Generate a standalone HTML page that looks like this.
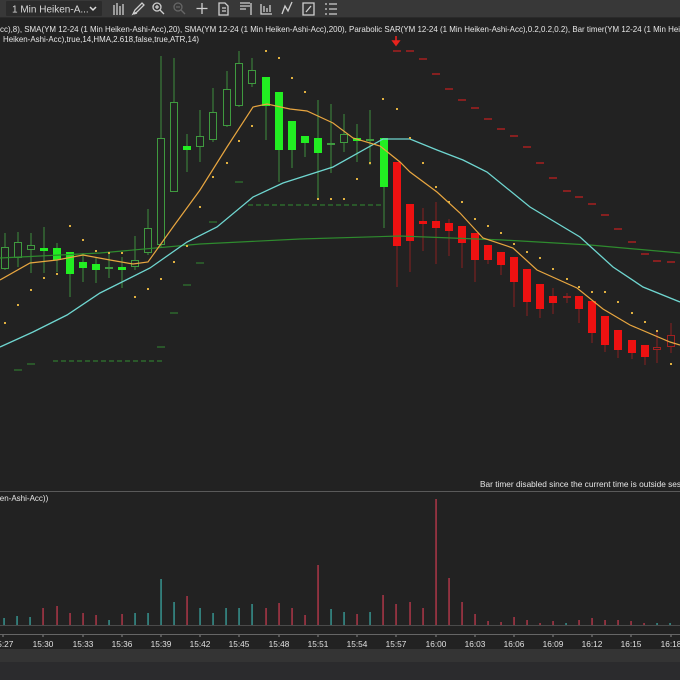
<!DOCTYPE html>
<html><head><meta charset="utf-8"><style>
html,body{margin:0;padding:0;background:#222;}
body{width:680px;height:680px;overflow:hidden;position:relative;font-family:"Liberation Sans",sans-serif;}
svg{position:absolute;left:0;top:0}
</style></head><body>
<svg id="s" width="680" height="680" viewBox="0 0 680 680" xmlns="http://www.w3.org/2000/svg">
<rect x="0" y="0" width="680" height="680" fill="#222"/>
<rect x="0" y="0" width="680" height="17" fill="#383838"/>
<rect x="0" y="17" width="680" height="1" fill="#2a2a2a"/>
<rect x="6" y="1" width="96" height="15" fill="#2b2b2b" rx="1"/>
<text x="12" y="12.5" font-size="10" fill="#d8d8d8">1 Min Heiken-A...</text>
<path d="M90 7 l3 3 l3 -3" stroke="#ddd" stroke-width="1.5" fill="none"/>
<g stroke="#cfcfcf" fill="none" stroke-width="1.3">
<path d="M114 5v10M117 3v12M120 6v9M123 4v11"/>
<path d="M133 14l2-4 7-7 2 2-7 7z M134 14l3-1"/>
<circle cx="157" cy="7" r="4"/><path d="M160 10l4 4M155 7h4M157 5v4"/>
<circle cx="178" cy="7" r="4" stroke="#666"/><path d="M181 10l4 4M176 7h4" stroke="#666"/>
<path d="M202 3v11M196.5 8.5h11"/>
<path d="M219 3h6l3 3v9h-9z M222 8h4M222 11h4"/>
<path d="M240 3h10M240 6h10M240 9h6M251 3v12"/>
<path d="M261 4v10h11M264 6v6M267 8v4M270 5v7"/>
<path d="M282 14l3-8 3 5 4-9"/>
<path d="M303 3h11v12h-11z M306 12l5-6"/>
<path d="M325 4h2M329 4h8M325 9h2M329 9h8M325 14h2M329 14h8"/>
</g>
<text x="0" y="32" font-size="8.3" fill="#e6e6e6" textLength="684" lengthAdjust="spacingAndGlyphs">cc),8), SMA(YM 12-24 (1 Min Heiken-Ashi-Acc),20), SMA(YM 12-24 (1 Min Heiken-Ashi-Acc),200), Parabolic SAR(YM 12-24 (1 Min Heiken-Ashi-Acc),0.2,0.2,0.2), Bar timer(YM 12-24 (1 Min Heik</text>
<text x="3" y="42" font-size="8.3" fill="#e6e6e6" textLength="196" lengthAdjust="spacingAndGlyphs">Heiken-Ashi-Acc),true,14,HMA,2.618,false,true,ATR,14)</text>
<path d="M396 36v7M393 41l3 4 3-4z" stroke="#e8231d" fill="#e8231d" stroke-width="1.6"/>
<g id="g"></g>
<text x="480" y="487" font-size="8.3" fill="#e6e6e6">Bar timer disabled since the current time is outside ses</text>
<rect x="0" y="491" width="680" height="1" fill="#5a5a5a"/>
<text x="-6" y="501" font-size="8" fill="#e6e6e6">iken-Ashi-Acc))</text>
<rect x="0" y="625" width="680" height="1" fill="#4a4a4a"/>
<rect x="0" y="634" width="680" height="1" fill="#666"/>
<rect x="0" y="649" width="680" height="13" fill="#343434"/>
<rect x="0" y="662" width="680" height="18" fill="#2b2b2d"/>
<g font-size="8.3" fill="#e0e0e0" text-anchor="middle" id="lbl">
<text x="3" y="647">15:27</text><text x="43" y="647">15:30</text><text x="83" y="647">15:33</text><text x="122" y="647">15:36</text><text x="161" y="647">15:39</text><text x="200" y="647">15:42</text><text x="239" y="647">15:45</text><text x="279" y="647">15:48</text><text x="318" y="647">15:51</text><text x="357" y="647">15:54</text><text x="396" y="647">15:57</text><text x="436" y="647">16:00</text><text x="475" y="647">16:03</text><text x="514" y="647">16:06</text><text x="553" y="647">16:09</text><text x="592" y="647">16:12</text><text x="631" y="647">16:15</text><text x="671" y="647">16:18</text>
</g>
</svg>
<script>
var g=document.getElementById('g'),h='';
function L(pts,c,w){h+='<polyline fill="none" stroke="'+c+'" stroke-width="'+w+'" points="'+pts+'"/>';}
h+='<line x1="248" y1="205" x2="383" y2="205" stroke="#2f7a2f" stroke-width="1.2" stroke-dasharray="5,3"/>';
h+='<line x1="53" y1="361" x2="165" y2="361" stroke="#2f7a2f" stroke-width="1.2" stroke-dasharray="5,3"/>';
[[239,182],[213,222],[200,263],[187,285],[174,313],[161,347],[31,364],[18,370]].forEach(function(d){h+='<line x1="'+(d[0]-4)+'" y1="'+d[1]+'" x2="'+(d[0]+4)+'" y2="'+d[1]+'" stroke="#2f7a2f" stroke-width="1.2"/>';});
var C=[[5,247,269,233,270,'h'],[18,242,258,232,267,'h'],[31,245,250,233,273,'h'],[44,248,251,227,273,'f'],[57,248,260,243,272,'f'],[70,252,274,252,297,'f'],[83,262,268,253,282,'f'],[96,264,270,257,283,'f'],[109,267,268,253,278,'h'],[122,267,270,257,288,'f'],[135,260,267,236,270,'h'],[148,228,253,209,255,'h'],[161,138,245,56,247,'h'],[174,102,192,58,192,'h'],[187,146,150,134,172,'f'],[200,136,147,110,162,'h'],[213,112,140,88,142,'h'],[227,89,126,71,127,'h'],[239,63,106,51,107,'h'],[252,70,84,58,87,'h'],[266,77,106,77,140,'f'],[279,92,150,92,182,'f'],[292,121,150,121,168,'f'],[305,136,143,136,157,'f'],[318,138,153,100,200,'f'],[331,143,145,104,173,'h'],[344,134,143,114,152,'h'],[357,138,141,124,162,'f'],[370,139,140,110,165,'h'],[384,138,187,138,228,'f'],
[397,162,246,162,287,'r'],[410,204,241,204,272,'r'],[423,221,224,208,251,'r'],[436,221,228,202,264,'r'],[449,223,231,219,256,'r'],[462,226,243,226,268,'r'],[475,233,260,233,282,'r'],[488,245,260,245,264,'r'],[501,252,265,252,275,'r'],[514,257,282,257,307,'r'],[527,269,302,269,316,'r'],[540,284,309,284,318,'r'],[553,296,303,288,314,'r'],[567,296,298,293,303,'o'],[579,296,309,296,323,'r'],[592,301,333,301,343,'r'],[605,316,345,316,352,'r'],[618,330,350,330,358,'r'],[632,340,353,340,359,'r'],[645,345,357,345,365,'r'],[657,347,350,330,363,'o'],[671,335,347,323,353,'o']];
C.forEach(function(c){var x=c[0],gr=(c[5]=='h'||c[5]=='f'),wc=gr?'#3f8f3f':'#8a2020';
h+='<line x1="'+x+'" y1="'+c[3]+'" x2="'+x+'" y2="'+c[4]+'" stroke="'+wc+'" stroke-width="1"/>';
var bh=Math.max(1,c[2]-c[1]);
if(c[5]=='f')h+='<rect x="'+(x-4)+'" y="'+c[1]+'" width="8" height="'+bh+'" fill="#22ee22"/>';
else if(c[5]=='r')h+='<rect x="'+(x-4)+'" y="'+c[1]+'" width="8" height="'+bh+'" fill="#ee1111"/>';
else h+='<rect x="'+(x-3.5)+'" y="'+(c[1]+0.5)+'" width="7" height="'+Math.max(1,bh-1)+'" fill="#222" stroke="'+(gr?'#3f9a3f':'#a02020')+'" stroke-width="1"/>';});
L('0,258 100,253 200,244 300,239 400,236 503,240 590,245 680,253','#2e8b2e',1.2);
L('0,347 33,332 67,315 100,293 150,268 187,242 217,227 253,197 283,183 333,167 383,139 410,139 437,150 463,160 487,172 530,207 580,237 613,267 643,287 680,302','#6fd6d0',1.3);
L('0,280 30,263 57,260 83,255 110,260 133,264 148,262 173,227 200,190 227,147 253,107 267,104 290,109 307,111 333,123 353,138 380,146 400,162 410,172 437,192 460,213 483,238 513,248 537,270 577,288 603,309 630,325 670,342 680,345','#e8a640',1.2);
[[5,323],[18,305],[31,290],[44,278],[57,274],[70,226],[83,240],[96,251],[109,253],[122,253],[135,297],[148,289],[161,279],[174,262],[187,246],[200,207],[213,177],[227,163],[239,141],[252,126],[266,51],[279,58],[292,78],[305,92],[318,199],[331,199],[344,199],[357,179],[370,163],[383,99],[397,109],[410,138],[423,163],[436,187],[449,202],[462,202],[475,219],[488,226],[501,233],[514,244],[527,252],[540,258],[553,269],[567,279],[579,287],[592,292],[605,292],[618,302],[632,313],[645,322],[657,331],[671,364]].forEach(function(d){h+='<rect x="'+(d[0]-1)+'" y="'+(d[1]-1)+'" width="2" height="2" fill="#e0b040"/>';});
[[397,51],[410,51],[423,59],[436,74],[449,89],[462,100],[475,108],[488,119],[501,129],[514,136],[527,147],[540,163],[553,178],[567,191],[579,197],[592,204],[605,215],[618,229],[632,242],[645,254],[657,261],[671,262]].forEach(function(d){h+='<line x1="'+(d[0]-4)+'" y1="'+d[1]+'" x2="'+(d[0]+4)+'" y2="'+d[1]+'" stroke="#c82020" stroke-width="1.2"/>';});
var V=[[4,618,'t'],[17,616,'t'],[30,617,'t'],[43,608,'r'],[57,606,'r'],[70,613,'r'],[83,613,'r'],[96,615,'r'],[109,620,'t'],[122,614,'r'],[135,613,'t'],[148,613,'t'],[161,579,'t'],[174,602,'t'],[187,596,'r'],[200,608,'t'],[213,613,'t'],[226,608,'t'],[239,608,'t'],[252,604,'t'],[266,608,'r'],[279,603,'r'],[292,608,'r'],[305,615,'r'],[318,565,'r'],[331,609,'t'],[344,612,'t'],[357,614,'r'],[370,612,'t'],[383,595,'r'],[396,604,'r'],[410,602,'r'],[423,608,'r'],[436,499,'r'],[449,578,'r'],[462,602,'r'],[475,614,'r'],[488,621,'r'],[501,622,'r'],[514,617,'r'],[527,620,'r'],[540,623,'r'],[553,621,'r'],[566,623,'t'],[579,620,'r'],[592,618,'r'],[605,620,'r'],[618,620,'r'],[631,621,'r'],[644,623,'r'],[657,623,'t'],[670,623,'t']];
V.forEach(function(v){h+='<rect x="'+(v[0]-0.6)+'" y="'+v[1]+'" width="1.3" height="'+(625-v[1])+'" fill="'+(v[2]=='t'?'#3aa5a0':'#c23a4e')+'"/>';});
for(var i=0;i<18;i++){var x=[3,43,83,122,161,200,239,279,318,357,396,436,475,514,553,592,631,671][i];h+='<line x1="'+x+'" y1="634" x2="'+x+'" y2="637" stroke="#888"/>';}
g.innerHTML=h;
</script>
</body></html>
